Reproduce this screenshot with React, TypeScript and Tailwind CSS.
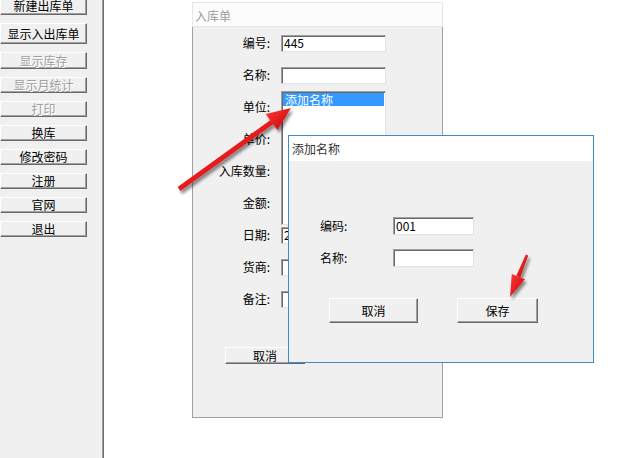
import type { ReactNode } from "react";

const raised =
  "border border-t-white border-l-white border-r-[#696969] border-b-[#696969] bg-[#f0f0f0] shadow-[inset_-1px_-1px_0_#a0a0a0]";
const sunken =
  "border border-t-[#a0a0a0] border-l-[#a0a0a0] border-r-[#e3e3e3] border-b-[#e3e3e3] bg-white shadow-[inset_1px_1px_0_#696969]";

const sideButtons: { label: string; h: string; disabled?: boolean }[] = [
  { label: "新建出库单", h: "h-[18px]" },
  { label: "显示入出库单", h: "h-[21px]" },
  { label: "显示库存", h: "h-[17px]", disabled: true },
  { label: "显示月统计", h: "h-[16px]", disabled: true },
  { label: "打印", h: "h-[16px]", disabled: true },
  { label: "换库", h: "h-[16px]" },
  { label: "修改密码", h: "h-[16px]" },
  { label: "注册", h: "h-[16px]" },
  { label: "官网", h: "h-[16px]" },
  { label: "退出", h: "h-[16px]" },
];

function FormRow({ label, children }: { label: string; children?: ReactNode }) {
  return (
    <div className="flex h-[32px] items-center">
      <span className="w-[77px] text-right">{label}</span>
      <div className="ml-[11px]">{children}</div>
    </div>
  );
}

function Field({ value = "" }: { value?: string }) {
  return (
    <div className={`flex h-[17px] w-[105px] items-center overflow-hidden pl-[2px] leading-none ${sunken}`}>
      {value}
    </div>
  );
}

function Arrows() {
  return (
    <svg
      className="pointer-events-none absolute inset-0"
      width={640}
      height={458}
      viewBox="0 0 640 458"
    >
      <defs>
        <linearGradient id="red" x1="0" y1="0" x2="1" y2="1">
          <stop offset="0" stopColor="#ff3b3b" />
          <stop offset="1" stopColor="#c80000" />
        </linearGradient>
        <filter id="shade" x="-20%" y="-20%" width="140%" height="140%">
          <feDropShadow dx="2" dy="3" stdDeviation="1.6" floodColor="#000" floodOpacity="0.45" />
        </filter>
      </defs>
      <g filter="url(#shade)" fill="url(#red)">
        <polygon points="177.6,187.1 270.5,120 273.5,124 180.4,190.9" />
        <polygon points="291,108 265.7,113.9 277.5,130.1" />
        <polygon points="525.8,254.5 516.3,275.8 520.3,277.4 528.2,255.5" />
        <polygon points="510,297 511.8,274 524.8,279.2" />
      </g>
    </svg>
  );
}

export default function App() {
  return (
    <div className="relative h-[458px] w-[640px] overflow-hidden bg-white font-['SimSun','Noto_Sans_CJK_SC',sans-serif] text-[12px] text-black">
      <div className="flex h-full">
        <aside className="flex h-full w-[104px] shrink-0 flex-col gap-2 border-r border-r-[#696969] bg-[#f0f0f0] shadow-[inset_-1px_0_0_#a0a0a0]">
          {sideButtons.map((b, i) => (
            <button
              key={b.label}
              type="button"
              className={`flex w-[87px] shrink-0 items-center justify-center leading-none ${b.h} ${raised} ${
                i === 0 ? "-mt-[3px]" : ""
              } ${b.disabled ? "text-[#a0a0a0] [text-shadow:1px_1px_0_#fff]" : ""}`}
            >
              {b.label}
            </button>
          ))}
        </aside>

        <main className="flex-1 bg-white">
          <section className="ml-[88px] mt-[2px] w-[251px]">
            <div className="h-[25px] border border-[#e6e6e6] bg-[#fcfcfc] pl-[2px] leading-[25px] text-[#9d9d9d]">
              入库单
            </div>
            <div className="relative h-[391px] border-x border-b border-[#a0a0a0] bg-[#f0f0f0]">
              <FormRow label="编号:">
                <Field value="445" />
              </FormRow>
              <FormRow label="名称:">
                <Field />
              </FormRow>
              <FormRow label="单位:" />
              <FormRow label="单价:">
                <Field />
              </FormRow>
              <FormRow label="入库数量:">
                <Field />
              </FormRow>
              <FormRow label="金额:">
                <Field />
              </FormRow>
              <FormRow label="日期:">
                <Field value="2021" />
              </FormRow>
              <FormRow label="货商:">
                <Field />
              </FormRow>
              <FormRow label="备注:">
                <Field />
              </FormRow>

              <div className="ml-[32px] mt-[32px] flex">
                <button type="button" className={`h-[17px] w-[80px] leading-none ${raised}`}>
                  取消
                </button>
              </div>

              <div className={`absolute left-[88px] top-[64px] h-[134px] w-[105px] p-px ${sunken}`}>
                <div className="h-[13px] bg-[#3399ff] pl-[2px] leading-[13px] text-white">添加名称</div>
              </div>
            </div>
          </section>
        </main>
      </div>

      <div className="absolute left-[288px] top-[135px] flex h-[228px] w-[306px] flex-col border border-[#3c8ccb] bg-[#f0f0f0]">
        <div className="h-[25px] bg-white pl-[3px] leading-[25px] text-[#333]">添加名称</div>
        <div className="flex-1">
          <div className="ml-[31px] mt-[56px] flex items-center">
            <span className="w-[73px]">编码:</span>
            <div className={`flex h-[18px] w-[81px] items-center pl-[2px] leading-none ${sunken}`}>001</div>
          </div>
          <div className="ml-[31px] mt-[14px] flex items-center">
            <span className="w-[73px]">名称:</span>
            <div className={`h-[18px] w-[81px] ${sunken}`} />
          </div>
          <div className="ml-[40px] mt-[31px] flex gap-[39px]">
            <button type="button" className={`h-[25px] w-[89px] leading-none ${raised}`}>
              取消
            </button>
            <button type="button" className={`h-[25px] w-[81px] leading-none ${raised}`}>
              保存
            </button>
          </div>
        </div>
      </div>

      <Arrows />
    </div>
  );
}
